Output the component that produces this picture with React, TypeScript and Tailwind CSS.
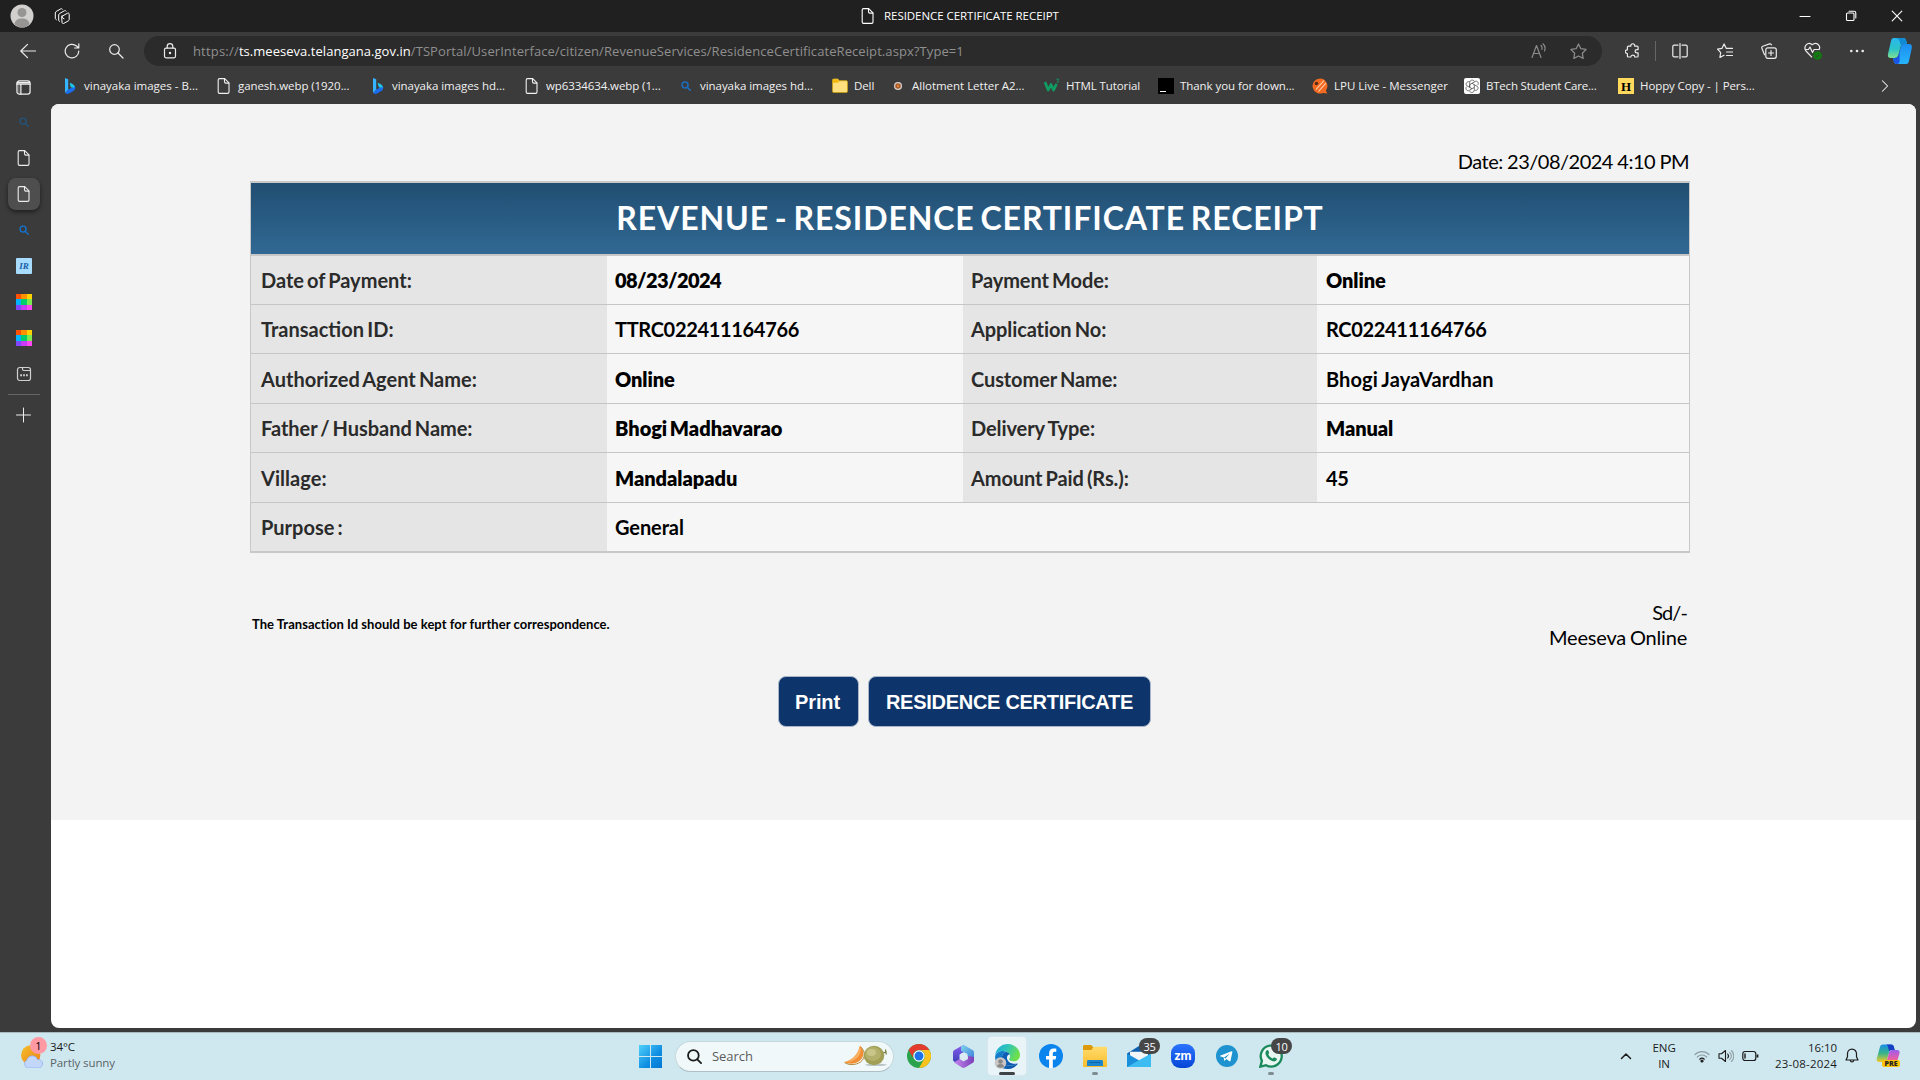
import React from 'react';

type IconProps = { className?: string };

const Stroke = ({ className = 'size-4', sw = 1.2, vb = 16, children }: IconProps & { sw?: number; vb?: number; children: React.ReactNode }) => (
  <svg className={`${className} shrink-0`} viewBox={`0 0 ${vb} ${vb}`} fill="none" stroke="currentColor" strokeWidth={sw} strokeLinecap="round" strokeLinejoin="round">
    {children}
  </svg>
);

const DocIcon = ({ className = 'size-4' }: IconProps) => (
  <Stroke className={className} sw={1.1}>
    <path d="M3.5.6h5.2l4.3 4.2v9.3c0 .8-.5 1.3-1.3 1.3H3.5c-.8 0-1.3-.5-1.3-1.3V1.9C2.2 1.1 2.7.6 3.5.6Z" />
    <path d="M8.500.8v3c0 .8.5 1.3 1.3 1.3h3" />
  </Stroke>
);

const SearchIcon = ({ className = 'size-4', sw = 1.2 }: IconProps & { sw?: number }) => (
  <Stroke className={className} sw={sw}>
    <circle cx="6.5" cy="6.5" r="4.8" />
    <path d="m10 10 5 5" />
  </Stroke>
);

const BingIcon = () => (
  <svg className="size-4 shrink-0" viewBox="0 0 16 16">
    <path d="M3 0l3.2 1.2v10.3L3.4 15C3.1 14.5 3 14 3 13.4Z" fill="#35b5ff" />
    <path d="M6.2 11.5 13 8.3c.6 2.2-.2 3.7-1.7 4.7l-4.3 2.500c-1.4.8-2.8.6-3.6-.5Z" fill="#1b6df0" />
    <path d="M7.6 4.800c2.900 1.200 5 2 5.400 4.500l-3.300.4-1.200-1.200Z" fill="#21c3e8" />
  </svg>
);

const FolderSmall = () => (
  <svg className="size-4 shrink-0" viewBox="0 0 16 16">
    <path d="M.5 2.300c0-.8.500-1.300 1.300-1.300h4l1.700 1.700h6.700c.8 0 1.300.5 1.300 1.300v9.200c0 .8-.5 1.300-1.300 1.300H1.800c-.8 0-1.300-.5-1.300-1.300Z" fill="#ffdf7e" stroke="#c19a1b" />
    <path d="M.8 1.600h5l1.500 1.300-1.500 1.900H.8Z" fill="#f5b90f" />
  </svg>
);

const TargetIcon = () => (
  <svg className="size-4 shrink-0" viewBox="0 0 16 16">
    <circle cx="8" cy="8" r="4" fill="#d9d3cc" />
    <circle cx="8" cy="8" r="2.8" fill="#a8582e" />
    <circle cx="8" cy="8" r="1.2" fill="#d8862f" />
  </svg>
);

const W3Icon = () => (
  <svg className="size-4 shrink-0" viewBox="0 0 16 16">
    <path d="M1 4l3.200 8L7 6.500 9.600 12l2.900-6" fill="none" stroke="#0f9d63" strokeWidth="2.7" strokeLinejoin="round" />
    <path d="M12.300 1.200h2.400l-1.200 1.500c1.700.1 1.600 2.200-.9 1.900" fill="none" stroke="#0f9d63" strokeWidth=".9" />
  </svg>
);

const TerminalIcon = () => (
  <span className="flex size-4 shrink-0 items-end bg-black p-0.5">
    <span className="h-px w-1.5 bg-white" />
  </span>
);

const LpuIcon = () => (
  <svg className="size-4 shrink-0" viewBox="0 0 16 16">
    <path d="M8 .5a7.500 7.500 0 1 0 3 14.400l4.200.6-1.300-3A7.500 7.500 0 0 0 8 .5Z" fill="#f26a21" />
    <path d="M4 11.500 12 2.500M6.500 13.500 14 5" stroke="#ffd9b8" strokeWidth="1.1" />
    <circle cx="4.500" cy="5.500" r="1.800" fill="#5b2a18" />
  </svg>
);

const GptIcon = () => (
  <svg className="size-4 shrink-0" viewBox="0 0 16 16">
    <rect width="16" height="16" rx="2" fill="#fff" />
    <g fill="none" stroke="#444" strokeWidth=".75">
      <path d="M8 5.300 10.300 6.700v2.700L8 10.700 5.700 9.400V6.700Z" />
      <path d="M5.700 9.400V4.500c0-2.600 3.600-3.300 4.600-1.100M8 5.300l3.800-2.100c2.300-.3 3.300 2.700 1.600 4M10.300 6.700l3.200 1.900c1.500 2-.5 4.400-2.600 3.700M10.300 9.400v2.800c-.2 2.400-3.600 3.200-4.700 1M8 10.700l-3.300 2c-2.400.5-3.600-2.500-2-4.100M5.700 9.400 2.700 7.600C1.100 5.700 3 3.100 5.700 3.800" />
    </g>
  </svg>
);

const HoppyIcon = () => (
  <span className="flex size-4 shrink-0 items-center justify-center bg-[#ffd95c] font-['Liberation_Serif',serif] text-[13px] leading-none font-black text-black">H</span>
);

const bookmarks: { icon: React.ReactNode; text: string; w: string; t: string }[] = [
  { icon: <BingIcon />, text: 'vinayaka images - B...', w: 'w-[154px]', t: 'tracking-[0px]' },
  { icon: <DocIcon />, text: 'ganesh.webp (1920...', w: 'w-[154px]', t: 'tracking-[-0.07px]' },
  { icon: <BingIcon />, text: 'vinayaka images hd...', w: 'w-[154px]', t: 'tracking-[-0.05px]' },
  { icon: <DocIcon />, text: 'wp6334634.webp (1...', w: 'w-[154px]', t: 'tracking-[-0.09px]' },
  { icon: <span className="flex size-4 items-center justify-center text-[#1a6dc0]"><SearchIcon className="size-2.5" sw={2.4} /></span>, text: 'vinayaka images hd...', w: 'w-[154px]', t: 'tracking-[-0.05px]' },
  { icon: <FolderSmall />, text: 'Dell', w: 'w-[58px]', t: 'tracking-[-0.1px]' },
  { icon: <TargetIcon />, text: 'Allotment Letter A2...', w: 'w-[154px]', t: 'tracking-[-0.02px]' },
  { icon: <W3Icon />, text: 'HTML Tutorial', w: 'w-[114px]', t: 'tracking-[-0.11px]' },
  { icon: <TerminalIcon />, text: 'Thank you for down...', w: 'w-[154px]', t: 'tracking-[-0.07px]' },
  { icon: <LpuIcon />, text: 'LPU Live - Messenger', w: 'w-[152px]', t: 'tracking-[0.01px]' },
  { icon: <GptIcon />, text: 'BTech Student Care...', w: 'w-[154px]', t: 'tracking-[-0.2px]' },
  { icon: <HoppyIcon />, text: 'Hoppy Copy - | Pers...', w: 'w-[154px]', t: 'tracking-[-0.1px]' },
];

const Copilot = () => (
  <svg className="size-7" viewBox="0 0 28 28">
    <defs>
      <linearGradient id="cpa" x1="0" y1="0" x2="0" y2="1"><stop offset="0" stopColor="#2bb8ee" /><stop offset=".55" stopColor="#2cc3c9" /><stop offset="1" stopColor="#7fe08f" /></linearGradient>
      <linearGradient id="cpb" x1="0" y1="0" x2="0" y2="1"><stop offset="0" stopColor="#1c8df0" /><stop offset="1" stopColor="#27b4fb" /></linearGradient>
    </defs>
    <path d="M8 1h9c2 0 2.700 1 3.300 3l.8 3h-3c-2 0-3 1-3.600 3l-2 7.500C11.900 20 10.500 21 8.500 21H4.500C2.500 21 1.500 19.500 2 17L5 4c.4-2 1.200-3 3-3Z" fill="url(#cpa)" />
    <path d="M8 1h9c2 0 2.700 1 3.300 3l.8 3h-3c-1.500 0-2.400.5-3 1.700L13.500 4C13 2 12 1 8 1Z" fill="#0f8bd4" />
    <path d="M20 27h-9c-2 0-2.800-1-3.300-3L7 21h2c2 0 3-1 3.600-3l2-7.500C15.200 8 16.500 7 18.500 7h4.500c2.300 0 3.300 1.500 2.800 4L23 24c-.4 2-1.200 3-3 3Z" fill="url(#cpb)" />
    <path d="M7 21h2c2 0 3-1 3.600-3l1-3.500v9.500c0 1.500-.8 3-2.600 3-2 0-2.800-1-3.300-3Z" fill="#1b53e4" />
  </svg>
);

const TitleBar = () => (
  <header className="flex h-8 items-center justify-between bg-[#202020] text-white">
    <div className="flex w-[860px] items-center gap-5 pl-2.5">
      <svg className="size-6" viewBox="0 0 24 24">
        <circle cx="12" cy="12" r="11.500" fill="#d2d0ce" />
        <circle cx="12" cy="8.500" r="4.500" fill="#979593" />
        <path d="M4.500 20.200c.5-4 3.500-5.700 7.500-5.700s7 1.700 7.500 5.700A11.500 11.500 0 0 1 12 23.500a11.500 11.500 0 0 1-7.500-3.300Z" fill="#979593" />
      </svg>
      <Stroke className="size-4" sw={1}>
        <path d="m8 7 3.700-1.700 3.600 1.500v6l-3.700 2.500L8 13.500Z" opacity="0" />
        <path d="M8 8.300 13.500 5.200c.8-.4 1.700 0 1.700 1v5.300c0 .6-.3 1-.8 1.300l-4.600 2.600c-.8.400-1.800 0-1.800-1ZM8 8l.5 1.800 1.500.9" />
        <path d="M5.700 13.500c-.6-.2-1-.7-1-1.400V7c0-.7.3-1.200.9-1.500l4.800-2.700c.6-.3 1.300-.3 1.700.3" />
        <path d="M2.300 11.700c-.6-.2-1-.7-1-1.400V5c0-.7.3-1.200.9-1.500L6.700.9c.6-.3 1.300-.2 1.700.3" />
      </Stroke>
    </div>
    <div className="flex flex-1 items-center gap-2">
      <DocIcon />
      <span className="text-[11.5px] leading-4 tracking-[-0.05px] whitespace-nowrap">RESIDENCE CERTIFICATE RECEIPT</span>
    </div>
    <div className="flex items-center">
      <div className="flex w-[46px] justify-center"><Stroke className="size-3" sw={1.1} vb={12}><path d="M1 6.500h10" /></Stroke></div>
      <div className="flex w-[46px] justify-center"><Stroke className="size-3" sw={1.1} vb={12}><rect x="1.500" y="3" width="7.500" height="7.500" rx="1" /><path d="M4 1.200h5c1.100 0 1.800.7 1.800 1.800v5" /></Stroke></div>
      <div className="flex w-[46px] justify-center"><Stroke className="size-3" sw={1.1} vb={12}><path d="m1.200 1.200 9.600 9.600m0-9.600-9.600 9.600" /></Stroke></div>
    </div>
  </header>
);

const Toolbar = () => (
  <div className="flex h-[38px] items-center bg-[#3b3b3b] text-[#ececec]">
    <div className="flex w-36 items-center gap-7 pl-5">
      <Stroke className="size-4"><path d="M15.500 8H.8M7.500 1.300.8 8l6.700 6.700" /></Stroke>
      <Stroke className="size-4"><path d="M14.800 8A6.800 6.800 0 1 1 12.500 3l2 1.800M14.800.8v4.200h-4.200" /></Stroke>
      <SearchIcon className="size-4" sw={1.2} />
    </div>
    <div className="flex h-[30px] w-[1459px] items-center rounded-full bg-[#2b2b2b] pl-[18px]">
      <Stroke className="size-4"><rect x="2.500" y="5.200" width="11" height="9.600" rx="1.500" /><path d="M5.200 5V3.500a2.800 2.800 0 0 1 5.600 0V5" /><circle cx="8" cy="10" r=".6" fill="currentColor" /></Stroke>
      <div className="flex pl-[15px] text-[13px] leading-5 whitespace-nowrap text-[#8f8f8f]">
        <span className="tracking-[0.2px]">https://</span>
        <span className="tracking-[0.04px] text-white">ts.meeseva.telangana.gov.in</span>
        <span className="tracking-[0.082px]">/TSPortal/UserInterface/citizen/RevenueServices/ResidenceCertificateReceipt.aspx?Type=1</span>
      </div>
      <div className="ml-auto flex gap-[23px] pr-[15px] text-[#8a8a8a]">
        <Stroke className="size-4"><path d="m1 14.500 4.500-12 4.500 12M2.700 10.500h5.800M10 2.500c1 1 1.300 2.500.8 4M12 .8c2 1.900 2.500 4.700 1.500 7.200" /></Stroke>
        <Stroke className="size-[17px]"><path d="m8 .9 2.200 4.500 4.900.7-3.500 3.500.8 4.900L8 12.200l-4.400 2.300.8-4.900L.9 6.100l4.900-.7Z" /></Stroke>
      </div>
    </div>
    <div className="flex flex-1 items-center pl-px">
      <div className="flex w-[52px] justify-center pl-2"><Stroke className="size-4"><path d="M3.500 3.200h2.300c-.5-3.300 4.400-3.300 3.900 0H12c.7 0 1.100.4 1.100 1.100v2.300H12c-2.600 0-2.600 3.300 0 3.300h1.100v3c0 .7-.4 1.100-1.100 1.100H9.700c.2-2.600-3.700-2.600-3.900 0H3.500c-.7 0-1.100-.4-1.100-1.100v-2.400C-.5 10.500-.5 6.500 2.400 6.800V4.300c0-.7.4-1.100 1.100-1.100Z" /></Stroke></div>
      <div className="h-5 w-px bg-[#666]" />
      <div className="flex w-[47px] justify-center"><Stroke className="size-4"><path d="M6 2.200H2.200C1.400 2.200.8 2.800.8 3.600v8.800c0 .8.6 1.400 1.400 1.400H6M10 2.200h3.800c.8 0 1.400.6 1.400 1.400v8.800c0 .8-.6 1.400-1.400 1.400H10M8 .5v15" /></Stroke></div>
      <div className="flex w-11 justify-center"><Stroke className="size-4"><path d="M9.300 5.400 7.100.9 4.900 5.400.5 6.100l3.200 3.500-.8 4.900L7 12.200M9.300 5.400h6.200M9.500 9h6M9.500 12.500h6" /></Stroke></div>
      <div className="flex w-11 justify-center"><Stroke className="size-4"><rect x="4.800" y="4.800" width="10.500" height="10.500" rx="2" /><path d="M10 7.500v5M7.500 10h5M3.500 11.800.9 5.200c-.4-1 0-1.700.9-2L8.500.9c1-.3 1.700.1 2 1" /></Stroke></div>
      <div className="flex w-11 justify-center">
        <svg className="h-[18px] w-[18px]" viewBox="0 0 18 18" fill="none" stroke="currentColor" strokeWidth="1.2" strokeLinejoin="round">
          <path d="M8 15.300 2 9C-1 5 3.500-1 8.200 2.700 12.500-1 17.500 4 14.800 8M.8 7.500h3.700L6 5l2.500 5.500 1.500-3h5" />
          <circle cx="13.500" cy="13.500" r="4.300" fill="#107c10" stroke="none" /><path d="m11.700 13.500 1.300 1.300 2.300-2.500" stroke="#3b3b3b" strokeWidth="1" />
        </svg>
      </div>
      <div className="flex w-11 justify-center"><svg className="size-4" viewBox="0 0 16 16" fill="currentColor"><circle cx="2.300" cy="8" r="1.300" /><circle cx="8" cy="8" r="1.300" /><circle cx="13.700" cy="8" r="1.300" /></svg></div>
      <div className="flex w-[41px] justify-center"><Copilot /></div>
    </div>
  </div>
);

const BookmarkBar = () => (
  <div className="flex h-[34px] items-center bg-[#3b3b3b] pb-0.5 text-[#f0f0f0]">
    <div className="flex w-[62px] pt-[3px] pl-4">
      <Stroke className="size-[15px]" sw={1.3}><rect x="1" y="1" width="14" height="14" rx="2.500" /><path d="M1 4.500h14M5.200 4.500V15M1.300 2.800h13" /><path d="M3 6v8" strokeWidth="2" opacity=".25" /></Stroke>
    </div>
    {bookmarks.map((b, i) => (
      <div key={i} className={`flex shrink-0 items-center gap-1.5 text-[11.5px] leading-4 whitespace-nowrap ${b.w}`}>
        {b.icon}
        <span className={b.t}>{b.text}</span>
      </div>
    ))}
    <div className="ml-auto pr-7"><Stroke className="size-3.5" sw={1.2}><path d="m5 2 6 6-6 6" /></Stroke></div>
  </div>
);

const ColorGrid = () => (
  <div className="grid size-4 grid-cols-3">
    <i className="bg-[#ff5000]" /><i className="bg-[#ff9100]" /><i className="bg-[#ffd200]" />
    <i className="bg-[#00b4ff]" /><i className="bg-[#00cd6b]" /><i className="bg-[#7fe84e]" />
    <i className="bg-[#8246ff]" /><i className="bg-[#c83cf5]" /><i className="bg-[#ff46f0]" />
  </div>
);

const Sidebar = () => (
  <nav className="flex w-[51px] flex-col bg-[#3b3b3b] text-[#ececec]">
    <div className="flex w-12 flex-col items-center">
      <div className="flex h-9 items-center text-[#22547f]"><SearchIcon className="size-2.5" sw={2.2} /></div>
      <div className="flex h-9 items-center"><DocIcon /></div>
      <div className="my-0.5 flex size-8 items-center justify-center rounded-lg bg-[#4e4e4e] shadow-[0_2px_4px_rgba(0,0,0,0.5)]"><DocIcon /></div>
      <div className="flex h-9 items-center text-[#1374cf]"><SearchIcon className="size-2.5" sw={2.2} /></div>
      <div className="flex h-9 items-center"><div className="flex size-4 items-center justify-center rounded-[1px] bg-[#a8dcff] font-['Liberation_Serif',serif] text-[9px] leading-none font-bold text-[#1560a8] italic">IR</div></div>
      <div className="flex h-9 items-center"><ColorGrid /></div>
      <div className="flex h-9 items-center"><ColorGrid /></div>
      <div className="flex h-9 items-center text-[#d0d0d0]">
        <Stroke className="size-4" sw={1.2}><rect x="1.500" y="1.500" width="13" height="13" rx="2.200" /><path d="M6.500 1.800v1.500c0 .8.4 1.200 1.200 1.200h6.500" /><path d="M4.200 9.200h1.800M7.100 9.200h1.800M10 9.200h1.800" strokeWidth="2" strokeLinecap="butt" /></Stroke>
      </div>
      <div className="mt-0.5 h-px w-8 bg-[#666]" />
      <div className="flex h-[39px] items-center"><Stroke className="size-4" sw={1}><path d="M7.500 1v14M.5 8h14" /></Stroke></div>
    </div>
  </nav>
);

type Cell = { t: string; k: string };
const rows: { h: string; label: string; a: Cell; label2: string; lt: string; lt2: string; b: Cell }[] = [
  { h: 'h-[49px]', label: 'Date of Payment:', lt: '[word-spacing:-1.8px]', a: { t: '08/23/2024', k: 'font-extrabold tracking-[-0.59px]' }, label2: 'Payment Mode:', lt2: 'tracking-[-0.1px] [word-spacing:-1.5px]', b: { t: 'Online', k: 'font-extrabold tracking-[-0.1px]' } },
  { h: 'h-[49px]', label: 'Transaction ID:', lt: '[word-spacing:-1.5px]', a: { t: 'TTRC022411164766', k: 'tracking-[-0.32px]' }, label2: 'Application No:', lt2: 'tracking-[-0.1px] [word-spacing:-1.5px]', b: { t: 'RC022411164766', k: 'tracking-[-0.32px]' } },
  { h: 'h-[50px]', label: 'Authorized Agent Name:', lt: '[word-spacing:-1.7px]', a: { t: 'Online', k: 'font-extrabold tracking-[-0.1px]' }, label2: 'Customer Name:', lt2: 'tracking-[-0.1px] [word-spacing:-1.5px]', b: { t: 'Bhogi JayaVardhan', k: 'tracking-[0.12px] [word-spacing:-1px]' } },
  { h: 'h-[49px]', label: 'Father / Husband Name:', lt: 'tracking-[-0.05px] [word-spacing:-1.7px]', a: { t: 'Bhogi Madhavarao', k: 'font-extrabold [word-spacing:-2px]' }, label2: 'Delivery Type:', lt2: 'tracking-[-0.1px] [word-spacing:-1.2px]', b: { t: 'Manual', k: 'font-extrabold tracking-[-0.1px]' } },
  { h: 'h-[50px]', label: 'Village:', lt: 'tracking-[0.05px]', a: { t: 'Mandalapadu', k: 'font-extrabold tracking-[-0.05px]' }, label2: 'Amount Paid (Rs.):', lt2: 'tracking-[-0.1px] [word-spacing:-1.6px]', b: { t: '45', k: 'tracking-[-0.4px]' } },
];

const labelCell = 'flex items-center bg-[#e5e5e5] text-[#2b2b2b]';
const valueCell = 'flex items-center bg-[#f6f6f6] text-black';

const Receipt = () => (
  <main className="flex flex-1 flex-col overflow-hidden rounded-lg bg-white">
    <section className="h-[716px] bg-[#f3f3f3] pt-[39px] pl-[199px] font-['Lato',sans-serif] text-xl text-black">
      <div className="w-[1440px]">
        <div className="flex h-[38px] items-center justify-end pr-px pb-0.5 tracking-[-0.5px] [word-spacing:-0.3px]">Date: 23/08/2024 4:10 PM</div>
        <div className="border border-t-2 border-b-2 border-[#c8c8c8] font-bold">
          <h1 className="flex h-[73px] items-center justify-center border-b-2 border-[#c8c8c8] bg-linear-to-b from-[#214e72] to-[#316994] text-[32px] tracking-[0.9px] [word-spacing:-2.8px] text-white">REVENUE - RESIDENCE CERTIFICATE RECEIPT</h1>
          {rows.map((r) => (
            <div key={r.label} className={`grid grid-cols-[356px_356px_354px_1fr] border-b border-[#c6c6c6] whitespace-nowrap ${r.h}`}>
              <div className={`${labelCell} pl-2.5 ${r.lt}`}>{r.label}</div>
              <div className={`${valueCell} pl-2 ${r.a.k}`}>{r.a.t}</div>
              <div className={`${labelCell} pl-2 ${r.lt2}`}>{r.label2}</div>
              <div className={`${valueCell} pl-[9px] ${r.b.k}`}>{r.b.t}</div>
            </div>
          ))}
          <div className="grid h-12 grid-cols-[356px_1fr]">
            <div className={`${labelCell} pl-2.5 [word-spacing:-1.8px]`}>Purpose :</div>
            <div className={`${valueCell} pl-2 tracking-[-0.1px]`}>General</div>
          </div>
        </div>
        <div className="flex items-center justify-between pt-[47px] pr-[3px] pl-0.5">
          <p className="pb-0.5 text-[13px] font-bold tracking-[0.03px]">The Transaction Id should be kept for further correspondence.</p>
          <div className="text-right leading-[25px]">
            <p className="tracking-[-0.9px]">Sd/-</p>
            <p className="tracking-[-0.2px] [word-spacing:-1px]">Meeseva Online</p>
          </div>
        </div>
        <div className="flex gap-[9px] pt-[26px] pl-[528px] font-['Liberation_Sans',Arial,sans-serif] font-bold text-white">
          <button className="h-[51px] w-[81px] rounded-lg border border-[#a9b6ca] bg-[#0d356b] pr-0.5 tracking-[-0.1px]">Print</button>
          <button className="h-[51px] w-[283px] rounded-lg border border-[#a9b6ca] bg-[#0d356b] tracking-[-0.28px]">RESIDENCE CERTIFICATE</button>
        </div>
      </div>
    </section>
  </main>
);

const Windows = () => (
  <svg className="size-[23px]" viewBox="0 0 23 23">
    <defs><linearGradient id="win" gradientUnits="userSpaceOnUse" x1="0" y1="0" x2="23" y2="23"><stop offset="0" stopColor="#4fd0fb" /><stop offset=".6" stopColor="#0f8ee2" /><stop offset="1" stopColor="#0078d4" /></linearGradient></defs>
    <path d="M0 0h11v11H0zM12 0h11v11H12zM0 12h11v11H0zM12 12h11v11H12z" fill="url(#win)" />
  </svg>
);

const Chrome = () => (
  <svg className="size-6" viewBox="0 0 24 24">
    <circle cx="12" cy="12" r="12" fill="#2ba24c" />
    <path d="M12 0a12 12 0 0 1 10.400 6H12a6 6 0 0 0-5.200 9L1.600 6A12 12 0 0 1 12 0Z" fill="#e33b2e" />
    <path d="M22.400 6A12 12 0 0 1 12 24l5.200-9A6 6 0 0 0 12 6Z" fill="#fcc31e" />
    <circle cx="12" cy="12" r="5.700" fill="#fff" /><circle cx="12" cy="12" r="4.500" fill="#1f73e8" />
  </svg>
);

const M365 = () => (
  <svg className="h-[23px] w-[21px]" viewBox="0 0 21 23">
    <defs>
      <linearGradient id="ma" x1="0" y1="0" x2="0" y2="1"><stop offset="0" stopColor="#8a5cf0" /><stop offset="1" stopColor="#3b3fb5" /></linearGradient>
      <linearGradient id="mb" x1="0" y1="0" x2="1" y2="1"><stop offset="0" stopColor="#7fd6ee" /><stop offset="1" stopColor="#3f7fd8" /></linearGradient>
      <linearGradient id="mc" x1="0" y1="0" x2="1" y2="0"><stop offset="0" stopColor="#c587ee" /><stop offset="1" stopColor="#7a3fb8" /></linearGradient>
    </defs>
    <path d="M8.500 1 11 0v7L6.500 9.500v5L3 18 0 15.500v-8C0 6.500.5 5.500 1.500 5Z" fill="url(#ma)" />
    <path d="M11 0 19.500 5c1 .6 1.500 1.500 1.500 2.500v6l-6.500-2V9L8 6V1.500Z" fill="url(#mb)" />
    <path d="M21 12v3.500c0 1-.5 2-1.500 2.500L12 22.500c-1 .6-2 .6-3 0l-8-5 5.500-3.500 4 2.500L15 14v-3Z" fill="url(#mc)" />
    <circle cx="10.700" cy="11.300" r="3.600" fill="#dcebf3" />
  </svg>
);

const Edge = () => (
  <svg className="h-[25px] w-[26px]" viewBox="0 0 26 25">
    <defs>
      <linearGradient id="ea" x1="0" y1="0" x2="1" y2=".4"><stop offset="0" stopColor="#1ba7e0" /><stop offset=".5" stopColor="#2fc6b8" /><stop offset="1" stopColor="#6fe04a" /></linearGradient>
      <linearGradient id="eb" x1="0" y1="0" x2="1" y2="1"><stop offset="0" stopColor="#1286d6" /><stop offset="1" stopColor="#0d4f9f" /></linearGradient>
    </defs>
    <path d="M1.200 11A12.300 12.300 0 0 1 13.500 0C20.500 0 26 5 26 11c0 3.800-2.800 6.300-6.300 6.300-3 0-4.600-1-4.600-2 0-.8 1-1.100 1-3C16.100 9.500 12.500 7 9 7c-3.500 0-6.500 1.500-7.800 4Z" fill="url(#ea)" />
    <path d="M1.200 12C2 8.500 5.500 7 9 7c1 0 2.200.3 3 .7-3 1.300-4.500 4.300-4.200 7.300.5 4.300 4.500 7 8.700 6.700 2.800-.2 5-1.200 6.500-2.200.5-.2.8.2.5.7A12.300 12.300 0 0 1 13.500 25C6.500 25 .5 19.500 1.200 12Z" fill="url(#eb)" />
    <path d="M12 7.700c-3 1.300-4.500 4.300-4.200 7.300.5 4.300 4.500 7 8.700 6.700 2.800-.2 5-1.200 6.500-2.200-5 1.200-9.500-1.500-10-5-.3-2.200.7-3.700 2.800-4.300-.8-1.100-2.200-2-3.800-2.500Z" fill="#0e5db4" />
    <circle cx="6.500" cy="19" r="5.800" fill="#c9c7c5" /><circle cx="6.500" cy="17.500" r="2.300" fill="#8b8988" /><path d="M3 22.500c0-3.300 7-3.300 7 0a5.800 5.800 0 0 1-7 0Z" fill="#8b8988" />
  </svg>
);

const Facebook = () => (
  <svg className="size-6" viewBox="0 0 24 24">
    <circle cx="12" cy="12" r="12" fill="#0b84ee" />
    <path d="M16.600 15.500l.6-3.500h-3.400V9.700c0-1 .5-1.900 2-1.900h1.500v-3S15.900 4.600 14.600 4.600c-2.800 0-4.500 1.700-4.500 4.700V12H7v3.500h3.100V24h3.700v-8.500Z" fill="#fff" />
  </svg>
);

const Explorer = () => (
  <svg className="h-[22px] w-6" viewBox="0 0 24 22">
    <defs><linearGradient id="fo" x1="0" y1="0" x2="0" y2="1"><stop offset="0" stopColor="#ffdb6e" /><stop offset="1" stopColor="#fbbd2a" /></linearGradient></defs>
    <path d="M0 1.500C0 .6.600 0 1.500 0h6.700l2 2v4H0Z" fill="#dc9a0c" />
    <path d="M0 5h8.500l2-3.300H23c.6 0 1 .4 1 1V21c0 .6-.4 1-1 1H1c-.6 0-1-.4-1-1Z" fill="url(#fo)" />
    <path d="M4 16.500c0-1 .6-1.500 1.500-1.500h13c.9 0 1.500.5 1.500 1.500V21H4Z" fill="#1a86d0" /><path d="M6.500 17.500h11" stroke="#1164a8" />
  </svg>
);

const Mail = () => (
  <svg className="h-[22px] w-6" viewBox="0 0 24 22">
    <path d="M0 8.500 12 1l12 7.500V22H0Z" fill="#0f5fae" />
    <path d="M3 6.700h18v6L12 18l-9-5Z" fill="#f3f6f9" />
    <path d="M0 8.500 13 16 0 22Z" fill="#1a8fdc" /><path d="M24 8.500 0 22h24Z" fill="#3cbcf2" />
  </svg>
);

const Zoom = () => (
  <span className="flex size-6 items-center justify-center rounded-[9px] bg-[#0b5cff] bg-linear-to-b from-[#2a72ff] to-[#0545d6] font-['Lato',sans-serif] text-[13px] leading-none font-black text-white">
    <span className="pb-0.5">zm</span>
  </span>
);

const Telegram = () => (
  <svg className="size-[22px]" viewBox="0 0 22 22">
    <circle cx="11" cy="11" r="11" fill="#1e93cf" />
    <path d="m4 10.700 11.500-4.500c.6-.2 1 .1.900.8l-1.900 8.800c-.1.600-.6.800-1.100.5l-3-2.200-1.500 1.400c-.4.300-.8.2-.8-.3l-.3-2.800-3.700-1.100c-.5-.2-.5-.4-.1-.6Z" fill="#fff" />
    <path d="m8 12.500 5.800-4-4.300 5Z" fill="#1e93cf" />
  </svg>
);

const WhatsApp = () => (
  <svg className="size-6" viewBox="0 0 24 24">
    <path d="m1.300 22.700 1.600-5.800A10.500 10.500 0 1 1 7 21.200Z" fill="#e9f6f1" stroke="#1a8a5c" strokeWidth="2.300" />
    <path d="M7.500 6.500c.8-.8 1.500-.6 1.900.3l.7 1.700c.2.600-.9 1.500-.7 1.900.9 1.900 2.300 3.200 4.200 4 .6.200 1.300-1.300 1.900-1l2 1c.6.300.5 1 .1 1.700-.8 1.400-2.400 1.700-4.400.9-3.300-1.300-5.500-3.500-6.500-6.400-.5-1.600-.2-3.200.8-4.100Z" fill="#1a8a5c" />
  </svg>
);

const Badge = ({ children }: { children: React.ReactNode }) => (
  <span className="absolute top-px left-[19px] flex h-4 w-[21px] items-center justify-center rounded-full bg-[#464646] text-[11px] leading-none tracking-[-0.3px] text-white">{children}</span>
);

const apps: { icon: React.ReactNode; badge?: string; active?: boolean; dot?: boolean }[] = [
  { icon: <Chrome /> },
  { icon: <M365 /> },
  { icon: <Edge />, active: true },
  { icon: <Facebook /> },
  { icon: <Explorer />, dot: true },
  { icon: <Mail />, badge: '35' },
  { icon: <Zoom /> },
  { icon: <Telegram /> },
  { icon: <WhatsApp />, badge: '10', dot: true },
];

const Melon = () => (
  <svg className="h-[22px] w-[44px]" viewBox="0 0 44 22">
    <ellipse cx="32" cy="19.800" rx="11" ry="1.200" fill="#b9c4c6" />
    <path d="M16 .5c4.500 5 4.500 11 0 15-5 4-11 4-15.500 1.500C9 15 14 9 16 .5Z" fill="#f28f35" />
    <path d="M16 .5c1.500 5 .5 9-3 12.500-3.500 3-8 4.500-11.500 4C9 15 14 9 16 .5Z" fill="#fbb164" />
    <path d="M17 2c4.500 5 4.500 11-.5 15C11.500 20.500 4.500 20.200.5 17.500" fill="none" stroke="#b58a3c" strokeWidth="1" />
    <ellipse cx="30" cy="10.500" rx="10.300" ry="9.700" fill="#a19f55" />
    <ellipse cx="29" cy="9" rx="8" ry="7" fill="#b3b06b" />
    <ellipse cx="27.500" cy="7.500" rx="4.500" ry="3.500" fill="#c9c588" />
    <path d="m39.500 8 3-1.500M41.500 4.500l.8 5" stroke="#6f7a35" strokeWidth="1.200" />
  </svg>
);

const Taskbar = () => (
  <footer className="flex h-12 items-center border-t border-[#a9b9be] bg-[#cfe8ef] pb-px text-[#1b1b1b]">
    <div className="flex w-[639px] items-center gap-[7px] pl-[21px]">
      <div className="relative size-[22px]">
        <svg className="size-[23px]" viewBox="0 0 23 23">
          <defs><linearGradient id="sun" x1="0" y1="0" x2="1" y2="1"><stop offset="0" stopColor="#f3c02c" /><stop offset="1" stopColor="#ee7f14" /></linearGradient></defs>
          <circle cx="9.700" cy="10" r="9.700" fill="url(#sun)" />
          <path d="M6.500 23a4.500 4.500 0 0 1-.5-8.200A5.500 5.500 0 0 1 16.500 14.500 4.300 4.300 0 0 1 18 23Z" fill="#c3d7fa" stroke="#8aaaf0" strokeWidth=".7" />
        </svg>
        <span className="absolute -top-2 left-[9px] flex size-[17px] items-center justify-center rounded-full bg-[#ff99a4] text-[11px] leading-none text-black">1</span>
      </div>
      <div className="pb-0.5 text-[11.5px] leading-4"><div className="tracking-[-0.1px]">34°C</div><div className="tracking-[-0.1px] text-[#5a6468]">Partly sunny</div></div>
    </div>
    <Windows />
    <div className="ml-[13px] flex h-[31px] w-[219px] items-center rounded-full border border-b-[#aebfc5] border-[#c5d8de] bg-[#f0f8fa] pl-[11px]">
      <Stroke className="size-[15px]" sw={1.9}><circle cx="6.800" cy="6.800" r="5.700" /><path d="m11 11 4 4" /></Stroke>
      <span className="pl-2.5 text-[13px] leading-4 tracking-[-0.05px] text-[#5c5c5c]">Search</span>
      <div className="ml-auto pr-[5px]"><Melon /></div>
    </div>
    <div className="ml-[3px] flex">
      {apps.map((a, i) => (
        <div key={i} className="flex w-11 justify-center">
          <div className={`relative flex h-[38px] w-[38px] items-center justify-center rounded ${a.active ? 'bg-[#e8f4f8] shadow-[0_0_0_1px_#d8e8ee]' : ''}`}>
            {a.icon}
            {a.badge && <Badge>{a.badge}</Badge>}
            {a.active && <span className="absolute bottom-0 h-[3px] w-4 rounded-full bg-[#3f4345]" />}
            {a.dot && <span className="absolute bottom-0 h-[3px] w-1.5 rounded-full bg-[#7f8d92]" />}
          </div>
        </div>
      ))}
    </div>
    <div className="ml-auto flex items-center">
      <Stroke className="size-3" sw={1.5} vb={12}><path d="m1.500 8.500 4.500-4.500 4.500 4.500" /></Stroke>
      <div className="ml-5 w-6 text-center text-[11.5px] leading-4"><div>ENG</div><div>IN</div></div>
      <div className="ml-[18px] flex items-center gap-2">
        <Stroke className="size-4" sw={1.2}><path d="M1 6.500a9.800 9.800 0 0 1 14 0M3.300 9a6.500 6.500 0 0 1 9.400 0" opacity=".35" /><path d="M5.700 11.200a3.400 3.400 0 0 1 4.600 0" /><circle cx="8" cy="13" r="1" fill="currentColor" /></Stroke>
        <Stroke className="size-4" sw={1.1}><path d="M1 5.700h2.500L7.500 2.500v11l-4-3.200H1ZM9.700 6c1 1.200 1 2.800 0 4" /><path d="M11.700 4.300c2 2.200 2 5.200 0 7.400M13.500 2.500c3 3.200 3 7.800 0 11" opacity=".35" /></Stroke>
        <svg className="h-4 w-[17px]" viewBox="0 0 17 16" fill="none" stroke="currentColor" strokeWidth="1.200"><rect x=".8" y="3.500" width="13" height="9" rx="2.300" /><path d="M15.500 6.500v3" strokeWidth="1.800" /><path d="M3 5.500v5" strokeWidth="1.400" /></svg>
      </div>
      <div className="ml-4 text-right text-[11.5px] leading-4"><div className="tracking-[-0.05px]">16:10</div><div className="tracking-[0.19px]">23-08-2024</div></div>
      <div className="ml-[7px]"><Stroke className="size-4" sw={1.2}><path d="M8 1.200c-2.700 0-4.500 2-4.500 4.600v3L2 12h12l-1.500-3.200v-3C12.500 3.200 10.700 1.200 8 1.200ZM6.300 12.200c.2 2.300 3.200 2.300 3.400 0" /></Stroke></div>
      <div className="relative mr-5 ml-4 h-6 w-6">
        <svg className="size-6" viewBox="0 0 24 24">
          <defs>
            <linearGradient id="pa" x1="0" y1="0" x2="0" y2="1"><stop offset="0" stopColor="#1a8fe8" /><stop offset=".5" stopColor="#36b48a" /><stop offset="1" stopColor="#f3cb28" /></linearGradient>
            <linearGradient id="pb" x1="0" y1="0" x2="0" y2="1"><stop offset="0" stopColor="#9a5cf0" /><stop offset=".6" stopColor="#f0609c" /><stop offset="1" stopColor="#f59b5a" /></linearGradient>
          </defs>
          <path d="M7 .5h8c2 0 2.500 1 3 2.800l.7 2.700H16c-1.700 0-2.500.8-3 2.500l-1.700 6.500c-.6 2-1.500 3-3.500 3H3.500C1 18 .3 16.500.8 14.500l3-11C4.300 1.500 5 .5 7 .5Z" fill="url(#pa)" />
          <path d="M10 .5h5c2 0 2.500 1 3 2.800l.7 2.700H16c-1.300 0-2.300.4-2.800 1.500L12 3C11.700 1.500 11 .7 10 .5Z" fill="#173fc4" />
          <path d="M17 22h-7c-2 0-3-1-3.200-4h1.500c1.700 0 2.500-1 3-2.700L13 8.700C13.600 6.800 14.500 6 16.300 6H21c2 0 3 1.200 2.500 3.300l-2.800 10C20 21.300 19 22 17 22Z" fill="url(#pb)" />
        </svg>
        <span className="absolute top-4 left-1.5 flex h-[7px] w-[18px] items-center justify-center rounded-[2px] bg-[#fdc50a] text-[7px] leading-none font-extrabold text-[#222]">PRE</span>
      </div>
    </div>
  </footer>
);

export default function App() {
  return (
    <div className="flex h-[1080px] w-[1920px] flex-col overflow-hidden bg-[#3b3b3b] font-['Open_Sans',sans-serif]">
      <TitleBar />
      <Toolbar />
      <BookmarkBar />
      <div className="flex h-[924px]">
        <Sidebar />
        <Receipt />
        <div className="w-[4px]" />
      </div>
      <div className="h-1" />
      <Taskbar />
    </div>
  );
}
